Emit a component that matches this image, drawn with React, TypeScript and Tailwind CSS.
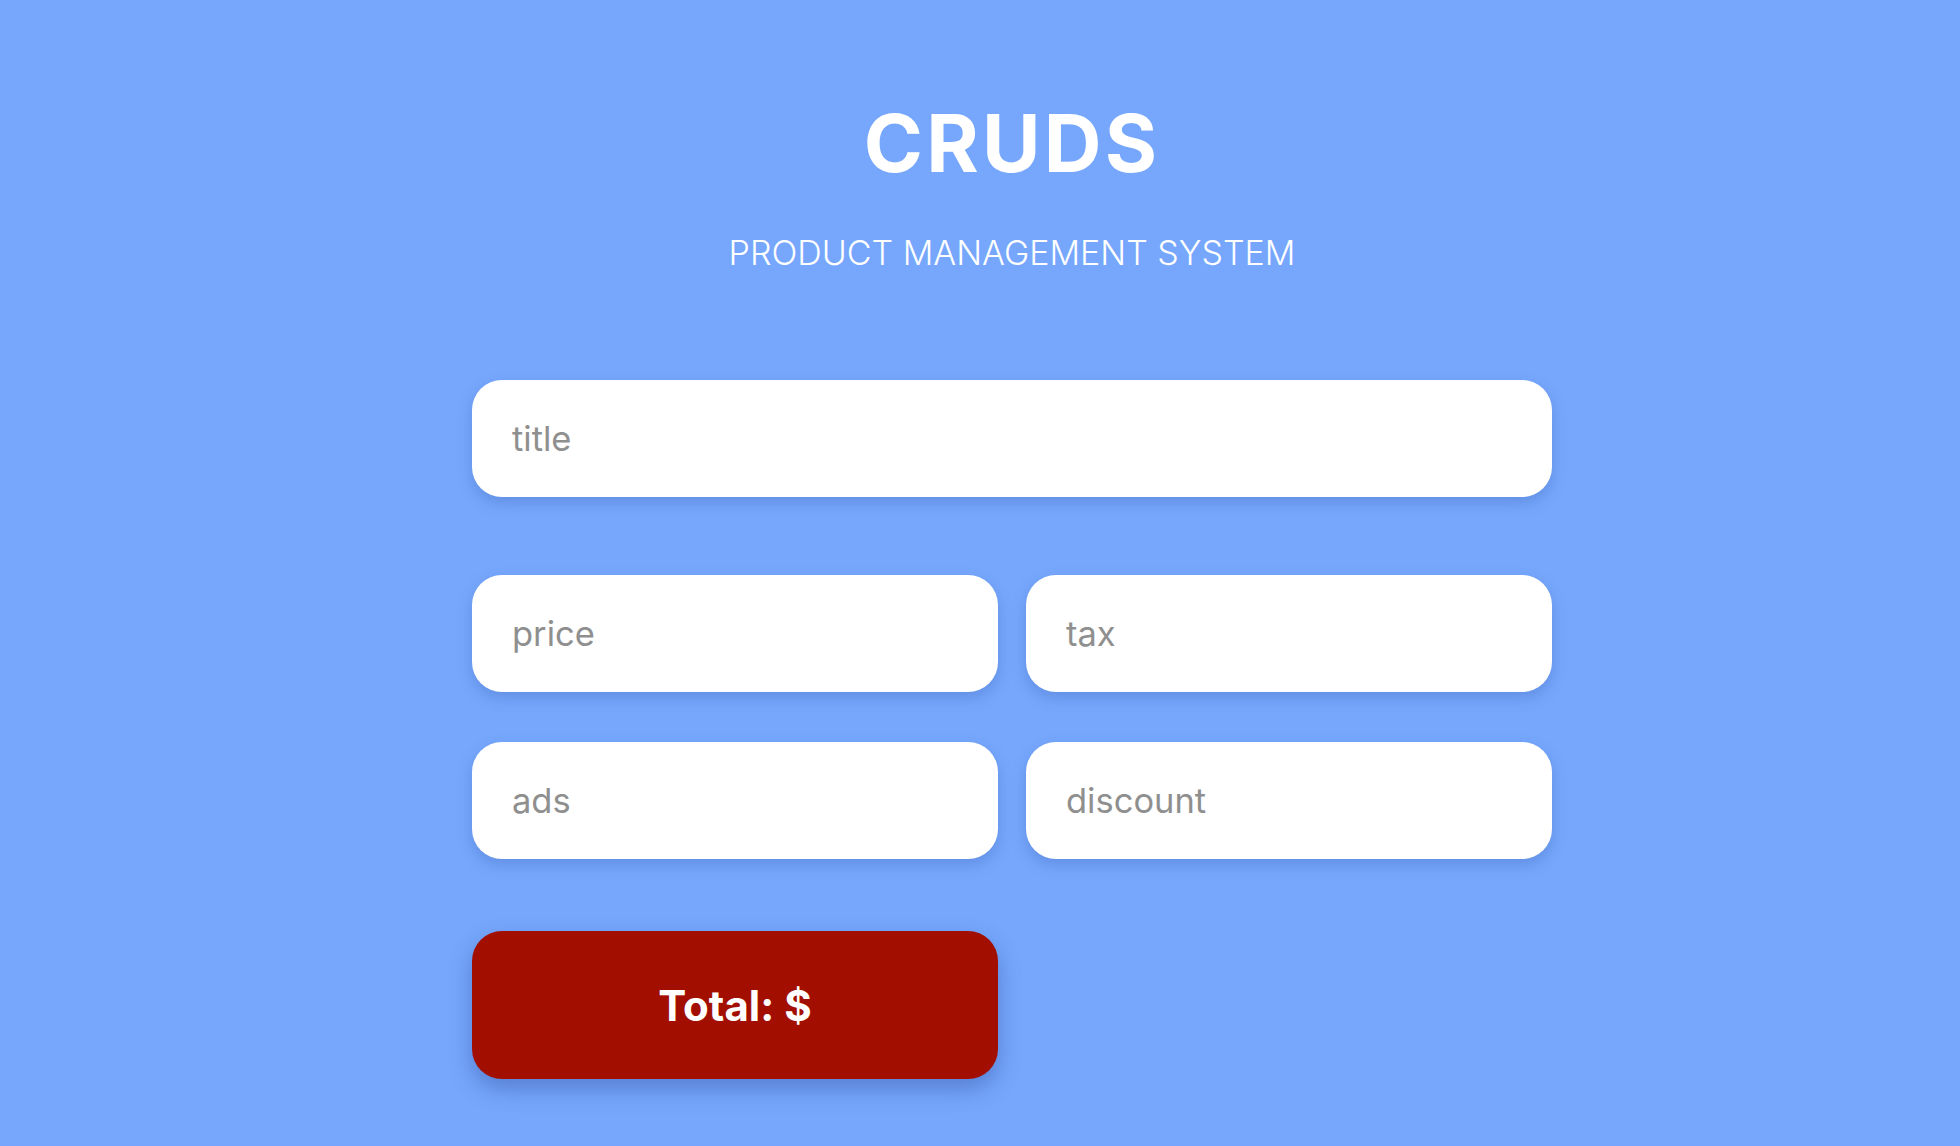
import React from "react";

const fieldClass =
  "h-[117px] w-full rounded-[30px] bg-white px-[40px] text-[34.5px] text-[#333] placeholder:text-[#8f8f8f] shadow-[0_6px_14px_rgba(60,100,180,0.35)] outline-none";

export default function App() {
  return (
    <div
      className="min-h-screen w-full bg-[#76a7fc] pl-[64px]"
      style={{ fontFamily: "Inter, 'Noto Sans', 'Liberation Sans', sans-serif" }}
    >
      <div className="mx-auto w-[1080px] pt-[103px] pb-[67px]">
        <header className="flex flex-col items-center text-white">
          <h1 className="text-[80px] leading-[80px] font-bold tracking-[0.04em]">CRUDS</h1>
          <p className="mt-[53px] text-[34px] leading-[34px] font-light">
            PRODUCT MANAGEMENT SYSTEM
          </p>
        </header>

        <form className="mt-[110px] flex flex-col">
          <input className={fieldClass} placeholder="title" />
          <div className="mt-[78px] grid grid-cols-2 gap-x-[28px] gap-y-[50px]">
            <input className={fieldClass} placeholder="price" />
            <input className={fieldClass} placeholder="tax" />
            <input className={fieldClass} placeholder="ads" />
            <input className={fieldClass} placeholder="discount" />
          </div>
          <div className="mt-[72px] grid grid-cols-2 gap-x-[28px]">
            <button
              type="button"
              className="h-[148px] rounded-[30px] bg-[#a20f00] text-[42px] font-bold text-white shadow-[0_10px_22px_rgba(50,80,160,0.45)]"
            >
              Total: $
            </button>
          </div>
        </form>
      </div>
    </div>
  );
}
